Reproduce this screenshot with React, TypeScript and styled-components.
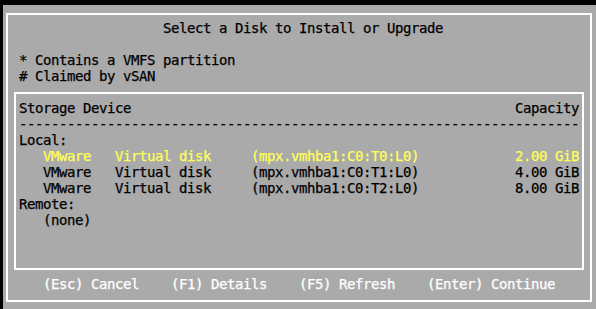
import styled, { createGlobalStyle } from 'styled-components';

const GlobalStyle = createGlobalStyle`
  html, body {
    margin: 0;
    background: #000;
  }
  body {
    overflow: hidden;
  }
`;

const Screen = styled.main`
  margin: 5px 0 0 3px;
  width: 593px;
  height: 304px;
  overflow: hidden;
  background: #aaaaaa;
  color: #000;
  font-family: 'DejaVu Sans Mono', 'Liberation Mono', monospace;
  font-size: 14px;
  letter-spacing: -0.43px;
  line-height: 16px;
  white-space: pre;
  -webkit-text-stroke: 0.25px currentColor;
`;

const Dialog = styled.section`
  box-sizing: border-box;
  display: flex;
  flex-direction: column;
  width: 586px;
  height: 289px;
  margin: 8px 0 0 3px;
  padding-top: 5px;
  border: 2px solid #fff;
`;

const Title = styled.h1`
  margin: 0 0 16px;
  padding-left: 155px;
  font: inherit;
`;

const Legend = styled.div`
  padding-left: 11px;
  margin-bottom: 8px;
`;

const Panel = styled.div`
  box-sizing: border-box;
  height: 178px;
  margin: 0 6px;
  padding: 6px 3px 8px;
  border: 2px solid #fff;
`;

const HeaderRow = styled.div`
  display: flex;
  justify-content: space-between;
`;

const Indent = styled.div`
  padding-left: 24px;
`;

const DeviceRow = styled.div<{ $selected?: boolean }>`
  display: grid;
  grid-template-columns: 72px 136px 1fr auto;
  padding-left: 24px;
  color: ${(props) => (props.$selected ? '#ffff55' : '#000')};
`;

const Capacity = styled.span`
  text-align: right;
`;

const Footer = styled.nav`
  display: flex;
  gap: 32px;
  margin-top: 6px;
  padding-left: 35px;
  color: #fff;
`;

const disks = [
  { vendor: 'VMware', model: 'Virtual disk', path: '(mpx.vmhba1:C0:T0:L0)', size: '2.00 GiB' },
  { vendor: 'VMware', model: 'Virtual disk', path: '(mpx.vmhba1:C0:T1:L0)', size: '4.00 GiB' },
  { vendor: 'VMware', model: 'Virtual disk', path: '(mpx.vmhba1:C0:T2:L0)', size: '8.00 GiB' },
];

const actions = ['(Esc) Cancel', '(F1) Details', '(F5) Refresh', '(Enter) Continue'];

export default function App() {
  return (
    <>
      <GlobalStyle />
      <Screen>
        <Dialog>
          <Title>Select a Disk to Install or Upgrade</Title>
          <Legend>
            <div>* Contains a VMFS partition</div>
            <div># Claimed by vSAN</div>
          </Legend>
          <Panel>
            <HeaderRow>
              <span>Storage Device</span>
              <span>Capacity</span>
            </HeaderRow>
            <div>{'-'.repeat(70)}</div>
            <div>Local:</div>
            {disks.map((disk, i) => (
              <DeviceRow key={disk.path} $selected={i === 0}>
                <span>{disk.vendor}</span>
                <span>{disk.model}</span>
                <span>{disk.path}</span>
                <Capacity>{disk.size}</Capacity>
              </DeviceRow>
            ))}
            <div>Remote:</div>
            <Indent>(none)</Indent>
          </Panel>
          <Footer>
            {actions.map((action) => (
              <span key={action}>{action}</span>
            ))}
          </Footer>
        </Dialog>
      </Screen>
    </>
  );
}
